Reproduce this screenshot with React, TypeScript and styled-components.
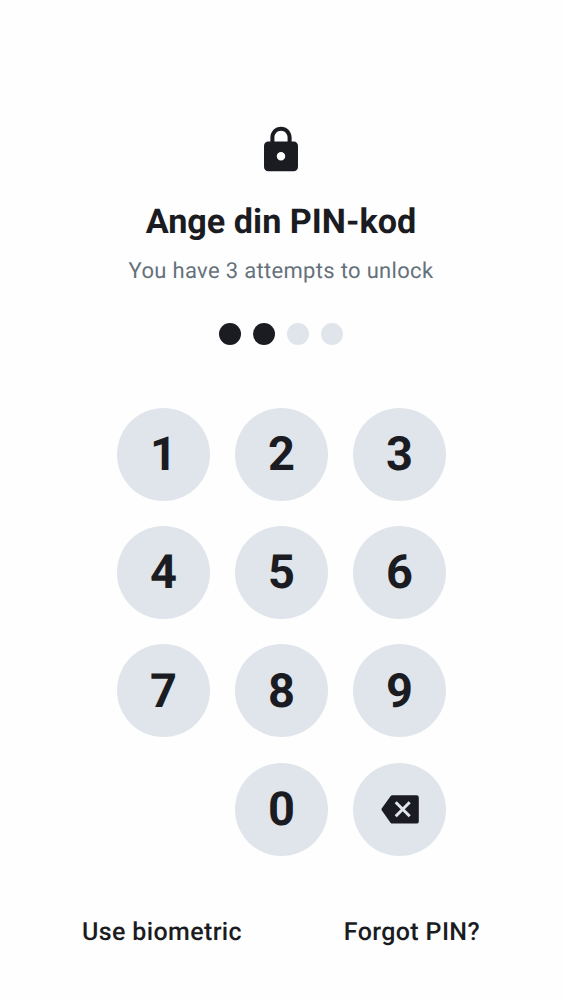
import React from 'react';
import styled, { createGlobalStyle } from 'styled-components';

const ink = '#1b1c22';
const muted = '#65717b';
const surface = '#e0e5ec';

const GlobalStyle = createGlobalStyle`
  * { box-sizing: border-box; }
  body { margin: 0; background: #fefefe; }
`;

const Screen = styled.main`
  width: 562px;
  height: 1000px;
  padding-top: 124px;
  display: flex;
  flex-direction: column;
  align-items: center;
  background: #fefefe;
  color: ${ink};
  font-family: Roboto, sans-serif;
  text-rendering: geometricPrecision;
`;

const LockIcon = styled.svg`
  display: block;
  width: 52px;
  height: 52px;
  fill: ${ink};
`;

const Title = styled.h1`
  margin: 24px 0 0;
  font-size: 34.2px;
  line-height: 44px;
  font-weight: 700;
  white-space: nowrap;
`;

const Subtitle = styled.p`
  margin: 12px 0 0;
  font-size: 22px;
  line-height: 32px;
  letter-spacing: 0.32px;
  color: ${muted};
  white-space: nowrap;
`;

const Dots = styled.div`
  display: flex;
  gap: 12.4px;
  margin-top: 35.4px;
`;

const Dot = styled.span<{ $filled: boolean }>`
  width: 21.9px;
  height: 21.9px;
  border-radius: 50%;
  background: ${({ $filled }) => ($filled ? ink : surface)};
`;

const Keypad = styled.div`
  display: grid;
  grid-template-columns: repeat(3, 93px);
  grid-auto-rows: 93px;
  gap: 25.3px 25.1px;
  margin: 62.4px 0 0 1px;
`;

const Key = styled.button<{ $column?: number }>`
  display: flex;
  align-items: center;
  justify-content: center;
  grid-column: ${({ $column }) => $column ?? 'auto'};
  padding: 2px 0 0;
  border: 0;
  border-radius: 50%;
  background: ${surface};
  color: ${ink};
  font-family: inherit;
  font-size: 47px;
  line-height: 56px;
  font-weight: 700;
  text-rendering: inherit;
`;

const Actions = styled.div`
  display: flex;
  justify-content: space-between;
  width: 398px;
  margin-top: 61.4px;
`;

const Action = styled.button`
  padding: 0;
  border: 0;
  background: none;
  color: ${ink};
  font-family: inherit;
  font-size: 25px;
  line-height: 32px;
  font-weight: 500;
  letter-spacing: 0.37px;
  text-rendering: inherit;
  white-space: nowrap;
`;

const pin = [true, true, false, false];
const digits = ['1', '2', '3', '4', '5', '6', '7', '8', '9'];

export default function App() {
  return (
    <>
      <GlobalStyle />
      <Screen>
        <LockIcon viewBox="0 0 24.5 24.5" aria-hidden="true">
          <path
            transform="translate(.25 .25)"
            d="M18 8h-1V6c0-2.76-2.24-5-5-5S7 3.24 7 6v2H6c-1.1 0-2 .9-2 2v10c0 1.1.9 2 2 2h12c1.1 0 2-.9 2-2V10c0-1.1-.9-2-2-2zm-6 9c-1.1 0-2-.9-2-2s.9-2 2-2 2 .9 2 2-.9 2-2 2zm3.1-9H8.9V6c0-1.71 1.39-3.1 3.1-3.1s3.1 1.39 3.1 3.1v2z"
          />
        </LockIcon>
        <Title>Ange din PIN-kod</Title>
        <Subtitle>You have 3 attempts to unlock</Subtitle>
        <Dots>
          {pin.map((filled, i) => (
            <Dot key={i} $filled={filled} />
          ))}
        </Dots>
        <Keypad>
          {digits.map((d) => (
            <Key key={d}>{d}</Key>
          ))}
          <Key $column={2}>0</Key>
          <Key aria-label="Delete">
            <svg width="38" height="30" viewBox="0 0 38 30" aria-hidden="true">
              <path
                d="M11.6 .2H35.6a2.2 2.2 0 0 1 2.2 2.2V26.400a2.200 2.200 0 0 1-2.200 2.200H11.600a2.800 2.800 0 0 1-2.300-1.200L.7 15.300a1.500 1.500 0 0 1 0-1.700L9.300 1.400A2.800 2.800 0 0 1 11.600 .2Z"
                fill={ink}
              />
              <path d="M14.700 7.300l14 14M28.700 7.300l-14 14" stroke={surface} strokeWidth="3" />
            </svg>
          </Key>
        </Keypad>
        <Actions>
          <Action>Use biometric</Action>
          <Action>Forgot PIN?</Action>
        </Actions>
      </Screen>
    </>
  );
}
